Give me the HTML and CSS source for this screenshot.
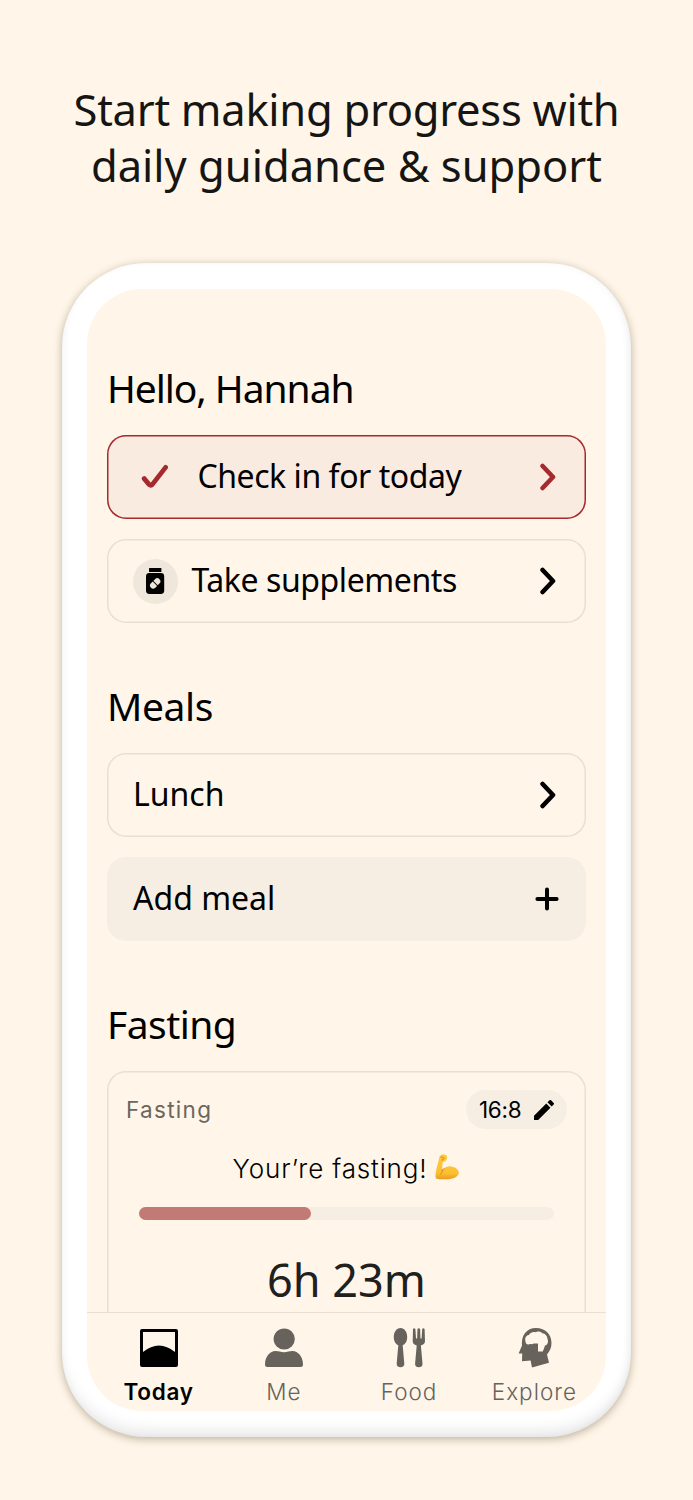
FILE: index.html
```html
<!DOCTYPE html>
<html lang="en">
<head>
    <meta charset="UTF-8">
    <meta name="viewport" content="width=device-width, initial-scale=1.0">
    <title>Today</title>
    <link rel="stylesheet" href="styles.css">
</head>
<body>
    <h1><span class="line-one">Start making progress with</span><br><span class="line-two">daily guidance &amp; support</span></h1>

    <div class="phone">
        <div class="screen">
            <main>
                <h2 class="hello">Hello, Hannah</h2>
                <div class="card active">
                    <span class="icon">
                        <svg width="28" height="26" viewBox="0 0 28 26"><path d="M3.2 14.6L8.2 20.6Q9.8 22.2 11.4 20.4L24.6 3.4" fill="none" stroke="#a52a2e" stroke-width="4.8" stroke-linecap="round" stroke-linejoin="round"/></svg>
                    </span>
                    <span class="label check-label">Check in for today</span>
                    <svg class="arrow" width="18" height="28" viewBox="0 0 18 28"><path d="M3.6 3L14 14L3.6 25" fill="none" stroke="currentColor" stroke-width="4.6" stroke-linecap="round" stroke-linejoin="round"/></svg>
                </div>
                <div class="card">
                    <span class="icon round">
                        <svg width="20" height="28" viewBox="0 0 20 28">
                            <rect x="4" y="1" width="12.4" height="4" rx=".6"/>
                            <rect x="1" y="6" width="18.2" height="21" rx="3.4"/>
                            <g transform="rotate(-45 10.2 16.4)" fill="#efe7dc">
                                <rect x="4.2" y="13.3" width="12" height="6.2" rx="3.1"/>
                                <path d="M10.2 13V20" stroke="#000" stroke-width="1"/>
                            </g>
                        </svg>
                    </span>
                    <span class="label take-label">Take supplements</span>
                    <svg class="arrow" width="18" height="28" viewBox="0 0 18 28"><path d="M3.6 3L14 14L3.6 25" fill="none" stroke="currentColor" stroke-width="4.6" stroke-linecap="round" stroke-linejoin="round"/></svg>
                </div>

                <h2 class="meals">Meals</h2>
                <div class="card">
                    <span class="label lunch-label">Lunch</span>
                    <svg class="arrow" width="18" height="28" viewBox="0 0 18 28"><path d="M3.6 3L14 14L3.6 25" fill="none" stroke="currentColor" stroke-width="4.6" stroke-linecap="round" stroke-linejoin="round"/></svg>
                </div>
                <div class="card add">
                    <span class="label add-label">Add meal</span>
                    <svg class="plus" width="24" height="24" viewBox="0 0 24 24"><path d="M12 2.4V21.6M2.4 12H21.6" stroke="#000" stroke-width="4" stroke-linecap="round"/></svg>
                </div>

                <h2 class="fast">Fasting</h2>
                <div class="fasting">
                    <div class="fasting-head">
                        <span class="fasting-name">Fasting</span>
                        <span class="plan">
                            <span class="plan-time">16:8</span>
                            <svg width="20" height="20" viewBox="3 3 18 18"><path d="M3 17.25V21h3.75L17.81 9.94l-3.75-3.75L3 17.25zM20.71 7.04a1 1 0 0 0 0-1.41l-2.34-2.34a1 1 0 0 0-1.41 0l-1.83 1.83 3.75 3.75 1.83-1.83z"/></svg>
                        </span>
                    </div>
                    <div class="status">
                        <span class="status-text">Your’re fasting!</span>
                        <svg width="26" height="28" viewBox="0 0 26 28">
                            <defs>
                                <linearGradient id="skin" x1="0" y1="0" x2="0" y2="1">
                                    <stop offset="0" stop-color="#ffc83a"/>
                                    <stop offset=".75" stop-color="#fdbf32"/>
                                    <stop offset="1" stop-color="#eb9b1c"/>
                                </linearGradient>
                            </defs>
                            <path d="M6 3C8 1 11 1.2 12.6 2.8C13.8 4.2 13.2 6 12 7.6C10.8 9 9.6 8.4 8.8 9.2C8.3 11.5 8.2 14 8.4 17C11 14 14 13.2 17 13.4C21.5 13.7 25 16.7 24.8 20C24.6 23.5 20 25.6 14 26.2C9 26.6 4 26.3 1.8 25.2C.8 22 3 13 4.6 8C5 6 4.8 4 6 3Z" fill="url(#skin)"/>
                            <path d="M8.4 16.5C8.4 19 7.6 20.2 6.2 21.4M8.4 17.2L10.4 15.2M6.6 4.2Q9.2 3.6 10.2 5.4Q9.6 7 7.6 7" fill="none" stroke="#d9861b" stroke-width="1"/>
                        </svg>
                    </div>
                    <div class="bar"><div class="bar-fill"></div></div>
                    <div class="time">6h 23m</div>
                </div>
            </main>

            <nav>
                <div class="tab current">
                    <svg width="40" height="40" viewBox="0 0 40 40"><path fill-rule="evenodd" d="M3 1H37Q39 1 39 3V37Q39 39 37 39H3Q1 39 1 37V3Q1 1 3 1ZM4 4V24Q20 11 36 24V4Z"/></svg>
                    <span class="today">Today</span>
                </div>
                <div class="tab">
                    <svg width="40" height="40" viewBox="0 0 40 40"><circle cx="20.2" cy="11" r="10.6"/><path d="M1 36.5C1 28.5 6 23 11.5 23C15 23 16.5 24.2 20 24.2C23.5 24.2 25 23 28.5 23C34 23 39 28.5 39 36.5Q39 39 36.5 39H3.5Q1 39 1 36.5Z"/></svg>
                    <span class="me">Me</span>
                </div>
                <div class="tab">
                    <svg width="40" height="40" viewBox="0 0 40 40">
                        <path d="M11.5 0C15.5 0 18.2 4.2 18.2 9C18.2 13.4 16.2 16.3 13.7 17.2L15.3 35.5C15.5 38 13.8 39.2 11.5 39.2C9.2 39.2 7.5 38 7.7 35.5L9.3 17.2C6.8 16.3 4.8 13.4 4.8 9C4.8 4.2 7.5 0 11.5 0Z"/>
                        <path d="M24 1Q25.2-.6 26.4 1L27 10.5H28.1L28.5 1Q29.8-.6 31.1 1L31.5 10.5H32.6L33.2 1Q34.4-.6 35.6 1L36 13C36 15.5 34.3 16.8 31.9 17.4L33.5 35.5C33.7 38 32 39.2 29.8 39.2C27.6 39.2 25.9 38 26.1 35.5L27.7 17.4C25.3 16.8 23.7 15.5 23.7 13Z"/>
                    </svg>
                    <span class="food">Food</span>
                </div>
                <div class="tab">
                    <svg width="40" height="40" viewBox="0 0 40 40">
                        <path d="M22 0C31.5 0 37.5 6.4 37.5 15C37.5 20 35.6 23.4 33 26.4L35 34.8L18 39.4L16.6 32.4L8 33.2L8.2 25.6H4.6L8 17.6C7 7.5 12.5 0 22 0Z"/>
                        <path d="M11.4 13C10.6 9.5 12.4 7.4 14.8 7C16.4 4.4 19 3.6 21.4 4.2C24 3 26.8 3.6 28.4 5.2C31.2 5.4 33.6 8.2 33.4 10.8C34.8 13.8 33.6 17 31 17.6C30.4 19.6 29.6 21.4 28.8 23.4H24V15.6H19.6C18 16.6 16.4 15.8 15.4 16.2C13 17 11.4 15.4 11.4 13Z" fill="#fff6e9"/>
                    </svg>
                    <span class="explore">Explore</span>
                </div>
            </nav>
        </div>
    </div>
</body>
</html>
```

FILE: styles.css
```css
* {
    box-sizing: border-box;
}
body {
    margin: 0;
    height: 1500px;
    padding-top: 81px;
    overflow: hidden;
    background: #fff6e9;
    color: #000;
    font-family: "Noto Sans", sans-serif;
}
h1 {
    margin: 0;
    height: 182px;
    text-align: center;
    font-size: 43.5px;
    font-weight: 400;
    line-height: 56px;
    color: #151513;
    white-space: nowrap;
}
.line-one {
    letter-spacing: -0.27px;
}
.phone {
    width: 569px;
    height: 1174px;
    margin: 0 auto;
    padding: 26px 25px;
    border-radius: 84px;
    background: #fff;
    box-shadow: 0 2px 9px rgba(80, 60, 30, 0.38), inset 0 -11px 16px -6px rgba(0, 0, 0, 0.11), inset -4px 0 10px -4px rgba(0, 0, 0, 0.07), inset 3px 0 8px -4px rgba(0, 0, 0, 0.04);
}
.screen {
    height: 1122px;
    border-radius: 55px;
    background: #fff6e9;
    overflow: hidden;
    display: flex;
    flex-direction: column;
}
main {
    height: 1023px;
    padding: 75px 20px 0;
    overflow: hidden;
}
h2 {
    margin: 0 0 23px;
    font-size: 39px;
    font-weight: 400;
    line-height: 48px;
    white-space: nowrap;
}
.hello {
    letter-spacing: -1.05px;
}
.meals {
    letter-spacing: -0.4px;
}
.fast {
    letter-spacing: -0.55px;
}
.card + h2 {
    margin-top: 59px;
}
.card {
    height: 84px;
    margin-bottom: 20px;
    padding: 0 29.5px 0 26px;
    border-radius: 19px;
    box-shadow: inset 0 0 0 1.5px #e9e0d3;
    display: flex;
    align-items: center;
    font-size: 32px;
    white-space: nowrap;
}
.card.active {
    background: #f9ebe0;
    box-shadow: inset 0 0 0 1.5px #a52a2e;
}
.card.add {
    background: #f6eee3;
    box-shadow: none;
    padding-right: 27px;
}
.icon {
    width: 45px;
    height: 45px;
    margin-right: 13.5px;
    display: flex;
    align-items: center;
    justify-content: center;
}
.active .icon {
    margin-right: 19.5px;
    padding-right: 1px;
}
.round {
    border-radius: 50%;
    background: #efe7dc;
    padding-right: 1px;
}
.label {
    line-height: 44px;
    margin-top: -2px;
}
.check-label {
    letter-spacing: -0.45px;
}
.take-label {
    letter-spacing: -0.42px;
}
.arrow, .plus {
    margin-left: auto;
}
.active .arrow {
    color: #a52a2e;
}
.fasting {
    height: 300px;
    padding: 19px;
    border-radius: 19px;
    box-shadow: inset 0 0 0 1.5px #e9e0d3;
    font-family: Inter, sans-serif;
    white-space: nowrap;
}
.fasting-head {
    display: flex;
    align-items: center;
    justify-content: space-between;
    height: 39px;
}
.fasting-name {
    color: #6b665f;
    font-size: 22.5px;
    letter-spacing: 1.3px;
}
.plan {
    width: 101px;
    height: 39px;
    padding: 0 13px;
    border-radius: 20px;
    background: #f6eee3;
    display: flex;
    align-items: center;
    justify-content: space-between;
}
.plan-time {
    font-size: 22.5px;
    letter-spacing: -0.3px;
}
.status {
    height: 36px;
    margin-top: 20px;
    display: flex;
    align-items: center;
    justify-content: center;
    gap: 7px;
    font-size: 26px;
    font-weight: 300;
}
.status-text {
    padding-top: 2px;
    letter-spacing: 0.85px;
}
.bar {
    height: 13px;
    margin: 22px 13px 0;
    border-radius: 7px;
    background: #f6eee3;
}
.bar-fill {
    width: 172px;
    height: 13px;
    border-radius: 7px;
    background: #c27a74;
}
.time {
    margin-top: 32px;
    text-align: center;
    font-family: "Noto Sans", sans-serif;
    font-size: 45px;
    line-height: 56px;
    color: #20201e;
}
nav {
    height: 99px;
    padding: 15px 9px 0;
    border-top: 1.5px solid #e9e0d3;
    display: flex;
    font-family: Inter, sans-serif;
    font-size: 22.5px;
    font-weight: 300;
}
.tab {
    flex: 1;
    display: flex;
    flex-direction: column;
    align-items: center;
    color: #67635c;
    fill: #67635c;
}
.tab span {
    margin-top: 10px;
    line-height: 28px;
    letter-spacing: 1px;
}
.current {
    color: #000;
    fill: #000;
    font-weight: 600;
}
.current .today {
    letter-spacing: 0.7px;
}
```
